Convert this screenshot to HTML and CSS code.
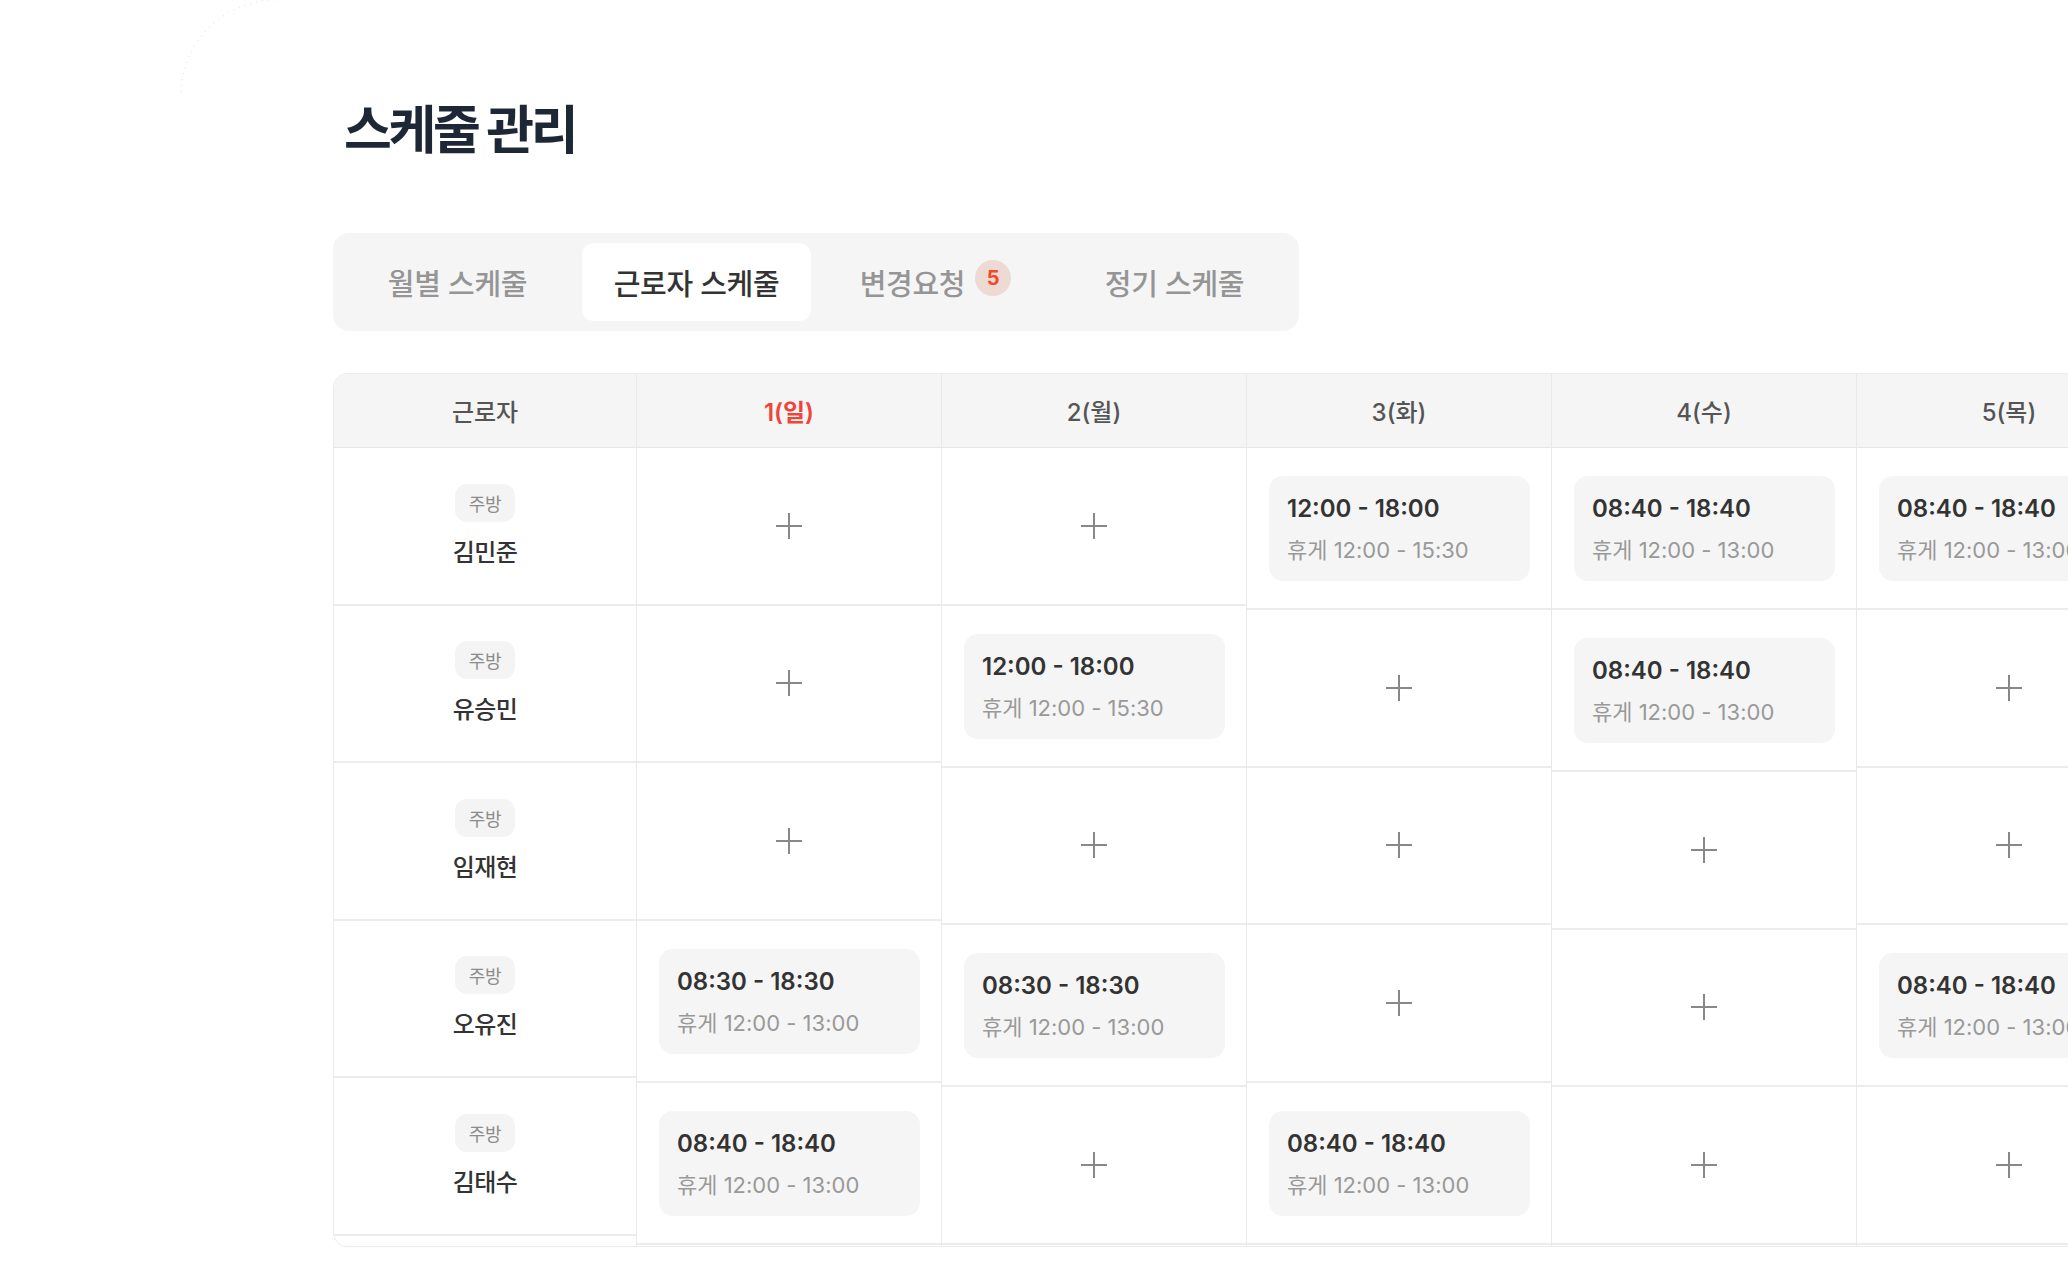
FILE: index.html
```html
<!DOCTYPE html>
<html lang="ko">
    <head>
        <meta charset="utf-8">
        <title>스케줄 관리</title>
        <link rel="stylesheet" href="styles.css">
    </head>
    <body>
        <svg width="0" height="0" class="defs">
            <symbol id="plus" viewBox="0 0 28 28">
                <path d="M14 1v26M1 14h26" stroke="currentColor" stroke-width="2" fill="none"/>
            </symbol>
        </svg>

        <svg class="ring" width="130" height="110" viewBox="0 0 130 110">
            <path d="M11 92 A95 95 0 0 1 106 0" fill="none" stroke="#dedede" stroke-width="1" stroke-dasharray="1 5"/>
        </svg>

        <main class="page">
            <h1 class="page-title">스케줄 관리</h1>

            <div class="tabs">
                <div class="tab">월별 스케줄</div>
                <div class="tab active">근로자 스케줄</div>
                <div class="tab">변경요청 <span class="badge">5</span></div>
                <div class="tab">정기 스케줄</div>
            </div>

            <div class="schedule">
                <!-- 근로자 -->
                <div class="col workers">
                    <div class="head">근로자</div>
                    <div class="cell worker"><span class="part">주방</span><span class="name">김민준</span></div>
                    <div class="cell worker"><span class="part">주방</span><span class="name">유승민</span></div>
                    <div class="cell worker"><span class="part">주방</span><span class="name">임재현</span></div>
                    <div class="cell worker"><span class="part">주방</span><span class="name">오유진</span></div>
                    <div class="cell worker"><span class="part">주방</span><span class="name">김태수</span></div>
                </div>

                <!-- 1(일) -->
                <div class="col day">
                    <div class="head sun">1(일)</div>
                    <div class="cell empty"><svg class="plus"><use href="#plus"/></svg></div>
                    <div class="cell empty"><svg class="plus"><use href="#plus"/></svg></div>
                    <div class="cell empty"><svg class="plus"><use href="#plus"/></svg></div>
                    <div class="cell shift">
                        <div class="card"><p class="time">08:30 - 18:30</p><p class="rest">휴게 12:00 - 13:00</p></div>
                    </div>
                    <div class="cell shift">
                        <div class="card"><p class="time">08:40 - 18:40</p><p class="rest">휴게 12:00 - 13:00</p></div>
                    </div>
                </div>

                <!-- 2(월) -->
                <div class="col day">
                    <div class="head">2(월)</div>
                    <div class="cell empty"><svg class="plus"><use href="#plus"/></svg></div>
                    <div class="cell shift">
                        <div class="card"><p class="time">12:00 - 18:00</p><p class="rest">휴게 12:00 - 15:30</p></div>
                    </div>
                    <div class="cell empty"><svg class="plus"><use href="#plus"/></svg></div>
                    <div class="cell shift">
                        <div class="card"><p class="time">08:30 - 18:30</p><p class="rest">휴게 12:00 - 13:00</p></div>
                    </div>
                    <div class="cell empty"><svg class="plus"><use href="#plus"/></svg></div>
                </div>

                <!-- 3(화) -->
                <div class="col day">
                    <div class="head">3(화)</div>
                    <div class="cell shift">
                        <div class="card"><p class="time">12:00 - 18:00</p><p class="rest">휴게 12:00 - 15:30</p></div>
                    </div>
                    <div class="cell empty"><svg class="plus"><use href="#plus"/></svg></div>
                    <div class="cell empty"><svg class="plus"><use href="#plus"/></svg></div>
                    <div class="cell empty"><svg class="plus"><use href="#plus"/></svg></div>
                    <div class="cell shift">
                        <div class="card"><p class="time">08:40 - 18:40</p><p class="rest">휴게 12:00 - 13:00</p></div>
                    </div>
                </div>

                <!-- 4(수) -->
                <div class="col day">
                    <div class="head">4(수)</div>
                    <div class="cell shift">
                        <div class="card"><p class="time">08:40 - 18:40</p><p class="rest">휴게 12:00 - 13:00</p></div>
                    </div>
                    <div class="cell shift">
                        <div class="card"><p class="time">08:40 - 18:40</p><p class="rest">휴게 12:00 - 13:00</p></div>
                    </div>
                    <div class="cell empty"><svg class="plus"><use href="#plus"/></svg></div>
                    <div class="cell empty"><svg class="plus"><use href="#plus"/></svg></div>
                    <div class="cell empty"><svg class="plus"><use href="#plus"/></svg></div>
                </div>

                <!-- 5(목) -->
                <div class="col day">
                    <div class="head">5(목)</div>
                    <div class="cell shift">
                        <div class="card"><p class="time">08:40 - 18:40</p><p class="rest">휴게 12:00 - 13:00</p></div>
                    </div>
                    <div class="cell empty"><svg class="plus"><use href="#plus"/></svg></div>
                    <div class="cell empty"><svg class="plus"><use href="#plus"/></svg></div>
                    <div class="cell shift">
                        <div class="card"><p class="time">08:40 - 18:40</p><p class="rest">휴게 12:00 - 13:00</p></div>
                    </div>
                    <div class="cell empty"><svg class="plus"><use href="#plus"/></svg></div>
                </div>
            </div>
        </main>
    </body>
</html>
```

FILE: styles.css
```css
html, body {
    margin: 0;
    overflow: hidden;
}

body {
    position: relative;
    background: #fff;
    color: #333;
    font-family: Inter, "Noto Sans CJK KR", sans-serif;
}

.defs {
    position: absolute;
}

/* faint dotted ring in the corner */
.ring {
    position: absolute;
    left: 170px;
    top: 0;
}

.page {
    padding: 98px 0 0 333px;
}

.page-title {
    margin: 0 0 0 11px;
    font-size: 52px;
    line-height: 66px;
    font-weight: 700;
    letter-spacing: -3.4px;
    color: #1d2736;
}

/* tabs */
.tabs {
    display: grid;
    grid-template-columns: repeat(4, 1fr);
    gap: 10px;
    width: 966px;
    box-sizing: border-box;
    margin-top: 69px;
    padding: 10px;
    background: #f5f5f5;
    border-radius: 16px;
}
.tab {
    display: flex;
    align-items: center;
    justify-content: center;
    height: 78px;
    border-radius: 12px;
    font-size: 29px;
    font-weight: 500;
    letter-spacing: -0.3px;
    color: #959595;
}
.tab.active {
    background: #fff;
    color: #333;
}
.badge {
    display: inline-flex;
    align-items: center;
    justify-content: center;
    width: 36px;
    height: 36px;
    margin: -8px 0 0 10px;
    border-radius: 50%;
    background: #eddbd3;
    color: #f2492c;
    font-size: 20px;
    font-weight: 700;
    letter-spacing: 0;
}

/* schedule table */
.schedule {
    display: flex;
    width: 1900px;
    height: 874px;
    box-sizing: border-box;
    margin-top: 42px;
    border: 1px solid #ebebeb;
    border-radius: 14px 0 0 14px;
    overflow: hidden;
}
.col {
    display: flex;
    flex-direction: column;
    flex: none;
}
.workers {
    width: 302px;
}
.day {
    width: 305px;
    box-sizing: border-box;
    border-left: 1px solid #e9e9e9;
}
.head {
    display: flex;
    align-items: center;
    justify-content: center;
    height: 73px;
    background: #f5f5f5;
    border-bottom: 1px solid #e6e6e6;
    font-size: 24px;
    font-weight: 500;
    color: #555;
    flex: none;
}
.head.sun {
    color: #f04438;
    font-weight: 600;
}

.cell {
    display: flex;
    flex-direction: column;
    align-items: center;
    justify-content: center;
    border-bottom: 2px solid #ececec;
    flex: none;
}
.worker, .empty {
    height: 155.5px;
}
.part {
    display: flex;
    align-items: center;
    height: 38px;
    padding: 0 14px;
    border-radius: 12px;
    background: #f4f4f4;
    font-size: 18px;
    letter-spacing: -0.3px;
    color: #8c8c8c;
}
.name {
    margin-top: 16px;
    font-size: 24px;
    line-height: 30px;
    font-weight: 500;
    letter-spacing: -0.6px;
    color: #333;
}
.plus {
    width: 28px;
    height: 28px;
    color: #888;
}

.shift {
    align-items: stretch;
    padding: 28px 21px 27px 22px;
}
.card {
    padding: 18px 18px 17px;
    border-radius: 14px;
    background: #f5f5f5;
}
.card p {
    margin: 0;
    white-space: nowrap;
}
.time {
    font-size: 24px;
    line-height: 30px;
    font-weight: 600;
    color: #333;
}
.rest {
    margin-top: 12px !important;
    font-size: 22px;
    line-height: 28px;
    color: #999;
}
```
